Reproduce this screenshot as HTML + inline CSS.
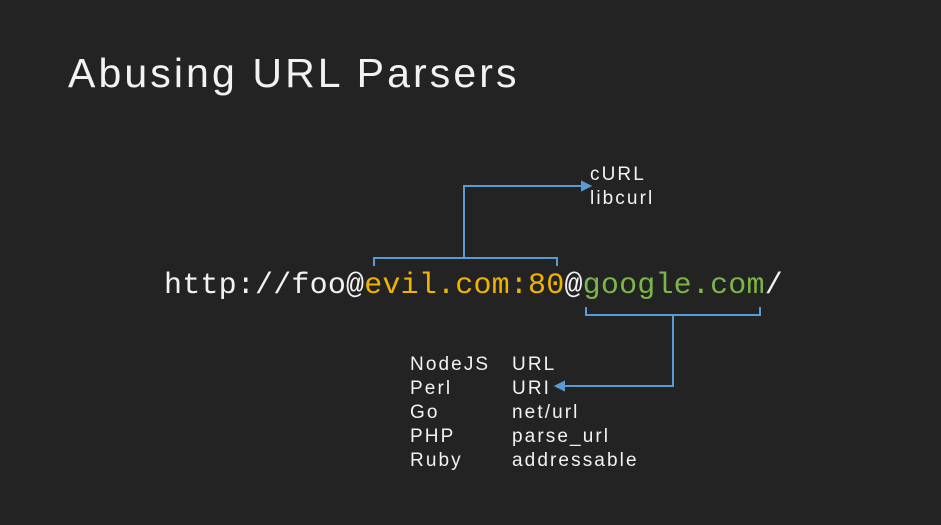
<!DOCTYPE html>
<html><head><style>
body{margin:0;width:941px;height:525px;background:#232323;overflow:hidden;position:relative;font-family:"Liberation Sans",sans-serif;color:#f2f2f2}
.t{position:absolute;left:68px;top:50px;font-size:41px;letter-spacing:3.1px;white-space:nowrap}
.u{position:absolute;left:164px;top:266px;font-family:"Liberation Mono",monospace;font-size:30px;letter-spacing:0.2px;white-space:nowrap;line-height:40px}
.y{color:#f0b400}.g{color:#7ab648}
.l{position:absolute;font-size:19px;letter-spacing:2.1px;line-height:24px;white-space:pre}
</style></head><body>
<div class="t">Abusing URL Parsers</div>
<div class="u">http://foo@<span class="y">evil.com:80</span>@<span class="g">google.com</span>/</div>
<div class="l" style="left:590px;top:163px">cURL
libcurl</div>
<div class="l" style="left:410px;top:353px">NodeJS
Perl
Go
PHP
Ruby</div>
<div class="l" style="left:512px;top:353px">URL
URI
net/url
parse_url
addressable</div>
<svg width="941" height="525" style="position:absolute;left:0;top:0" fill="none" stroke="#5b9bd5" stroke-width="2">
<path d="M374 266V258H557V266M464 258V186H583"/>
<path d="M590 186L582 182V190Z" fill="#5b9bd5"/>
<path d="M586 307V315H760V307M673 315V386H563"/>
<path d="M556 386L564 382V390Z" fill="#5b9bd5"/>
</svg>
</body></html>
